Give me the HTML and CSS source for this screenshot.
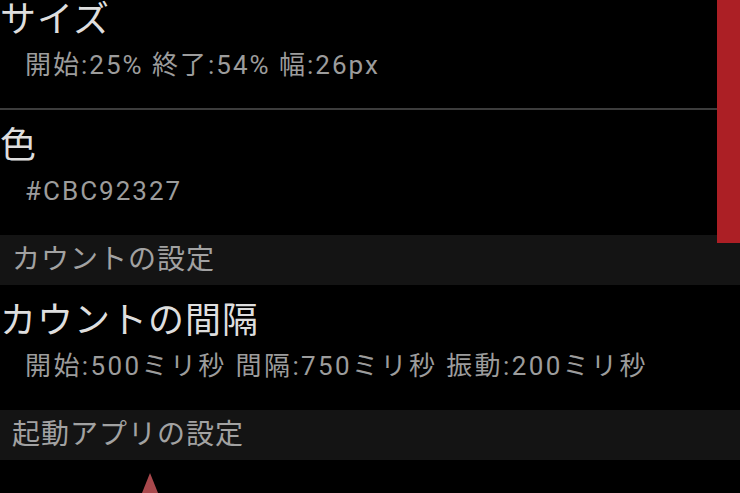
FILE: index.html
```html
<!DOCTYPE html>
<html lang="ja">
<head>
<meta charset="utf-8">
<link rel="stylesheet" href="styles.css">
</head>
<body>
<div class="screen">
  <div class="list">
    <div class="item item-first">
      <div class="title">サイズ</div>
      <div class="summary">開始:25% 終了:54% 幅:26px</div>
    </div>
    <div class="divider"></div>
    <div class="item">
      <div class="title">色</div>
      <div class="summary">#CBC92327</div>
    </div>
    <div class="category">カウントの設定</div>
    <div class="item">
      <div class="title">カウントの間隔</div>
      <div class="summary summary-wide">開始:500ミリ秒 間隔:750ミリ秒 振動:200ミリ秒</div>
    </div>
    <div class="category">起動アプリの設定</div>
    <div class="app-row">
      <svg class="app-icon" width="40" height="40" viewBox="0 0 40 40">
        <polygon points="20,0 36,40 4,40" fill="#a8484c"/>
      </svg>
    </div>
  </div>
  <div class="scrollbar"></div>
</div>
</body>
</html>
```

FILE: styles.css
```css
html, body {
  margin: 0;
  padding: 0;
  background: #000;
}
body {
  width: 740px;
  height: 493px;
  overflow: hidden;
  font-family: Roboto, "Noto Sans CJK JP", sans-serif;
}
.screen {
  position: relative;
  width: 740px;
  height: 493px;
  overflow: hidden;
}
.list {
  display: flex;
  flex-direction: column;
}
.item {
  display: flex;
  flex-direction: column;
  padding: 14px 0 0 0;
  height: 125px;
  box-sizing: border-box;
}
.item-first {
  padding-top: 3px;
  height: 108px;
}
.title {
  font-size: 36px;
  line-height: 44px;
  color: #dedede;
  letter-spacing: 1px;
}
.item-first .title {
  line-height: 34px;
}
.summary {
  font-size: 26px;
  line-height: 34px;
  color: #9c9c9c;
  letter-spacing: 2px;
  padding-left: 25px;
  margin-top: 6px;
}
.item-first .summary {
  margin-top: 11px;
}
.summary-wide {
  letter-spacing: 2.4px;
}
.divider {
  height: 2px;
  background: #3c3c3c;
  margin-right: 23px;
}
.category {
  height: 50px;
  line-height: 50px;
  background: #141414;
  color: #a2a2a2;
  font-size: 28px;
  letter-spacing: 1px;
  padding-left: 12px;
}
.app-row {
  display: flex;
  padding: 13px 0 0 130px;
}
.app-icon {
  display: block;
}
.scrollbar {
  position: absolute;
  top: 0;
  right: 0;
  width: 23px;
  height: 243px;
  background: #ac1f25;
}
```
